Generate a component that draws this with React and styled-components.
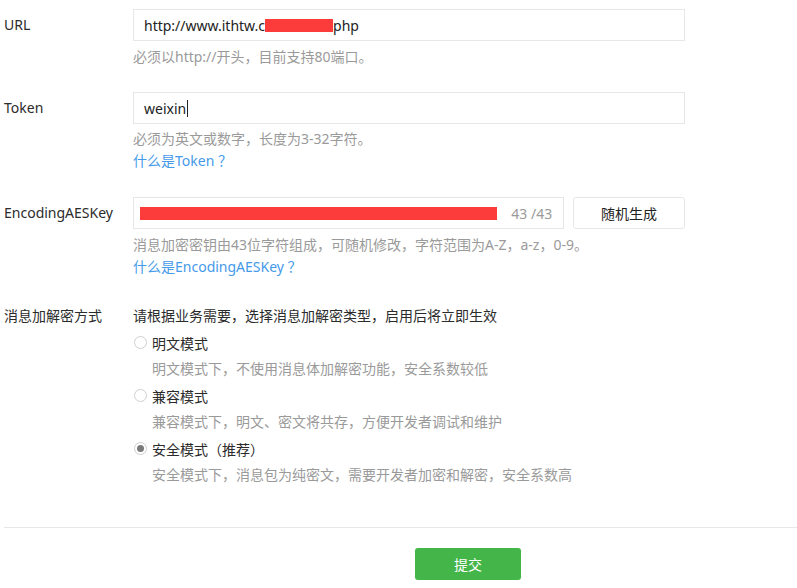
import React from "react";
import styled, { createGlobalStyle } from "styled-components";

const Global = createGlobalStyle`
  html, body { margin: 0; padding: 0; background: #fff; }
  body {
    font-family: "Noto Sans", "Noto Sans CJK SC", sans-serif;
    font-size: 14px;
    color: #353535;
  }
`;

const Page = styled.div`
  width: 797px;
  padding: 9px 0 0 4px;
  box-sizing: border-box;
`;

const Row = styled.div`
  display: grid;
  grid-template-columns: 129px 552px;
  margin-bottom: ${(p) => p.$gap || 0}px;
`;

const Label = styled.div`
  line-height: ${(p) => p.$lh || "31px"};
  color: #2b2b2b;
  white-space: nowrap;
`;

const Field = styled.div`
  display: flex;
  flex-direction: column;
`;

const InputLine = styled.div`
  display: flex;
  gap: 9px;
`;

const Input = styled.div`
  box-sizing: border-box;
  height: 32px;
  width: ${(p) => p.$w || 552}px;
  border: 1px solid #e7e7eb;
  padding: 0 11px 0 ${(p) => p.$pl || 10}px;
  display: flex;
  align-items: center;
  color: #222;
  font-size: 14px;
  white-space: nowrap;
  overflow: hidden;
`;

const Redact = styled.span`
  display: inline-block;
  width: ${(p) => p.$w}px;
  height: ${(p) => p.$h || 13}px;
  background: #fc3b3b;
  flex: none;
  margin-top: ${(p) => p.$mt || 0}px;
`;

const Caret = styled.span`
  display: inline-block;
  width: 1px;
  height: 17px;
  background: #222;
  margin-left: 1px;
`;

const Counter = styled.span`
  margin-left: auto;
  color: #9a9a9a;
`;

const GhostButton = styled.div`
  box-sizing: border-box;
  width: 112px;
  height: 32px;
  border: 1px solid #e4e8eb;
  border-radius: 3px;
  display: flex;
  align-items: center;
  justify-content: center;
  color: #222;
`;

const Hint = styled.div`
  line-height: 22px;
  color: #9a9a9a;
  margin-top: ${(p) => p.$mt || 0}px;
  white-space: nowrap;
`;

const Link = styled.a`
  display: block;
  line-height: 22px;
  color: #459ae9;
  text-decoration: none;
`;

const Lines = styled.div`
  display: flex;
  flex-direction: column;
`;

const Line = styled.div`
  line-height: 26.5px;
  height: 26.5px;
  white-space: nowrap;
  color: ${(p) => (p.$muted ? "#9a9a9a" : "#2b2b2b")};
  padding-left: ${(p) => (p.$indent ? 19 : 0)}px;
`;

const RadioRow = styled.label`
  display: flex;
  align-items: center;
  height: 26.5px;
  gap: 5px;
  padding-left: 1px;
  color: #2b2b2b;
`;

const Circle = styled.span`
  box-sizing: border-box;
  width: 13px;
  height: 13px;
  border-radius: 50%;
  border: 1px solid #cfcfcf;
  display: flex;
  align-items: center;
  justify-content: center;
  flex: none;
  &::after {
    content: "";
    width: 7px;
    height: 7px;
    border-radius: 50%;
    background: ${(p) => (p.$checked ? "#7a7a7a" : "transparent")};
  }
`;

const Divider = styled.hr`
  border: 0;
  border-top: 1px solid #e7e7eb;
  margin: 38px 0 0 0;
  width: 793px;
`;

const Footer = styled.div`
  padding: 20px 0 0 411px;
`;

const Submit = styled.button`
  width: 106px;
  height: 32px;
  border: 0;
  border-radius: 3px;
  background: #44b549;
  color: #fff;
  font-family: inherit;
  font-size: 14px;
  padding: 0;
`;

const modes = [
  { name: "明文模式", desc: "明文模式下，不使用消息体加解密功能，安全系数较低" },
  { name: "兼容模式", desc: "兼容模式下，明文、密文将共存，方便开发者调试和维护" },
  { name: "安全模式（推荐）", desc: "安全模式下，消息包为纯密文，需要开发者加密和解密，安全系数高", checked: true },
];

export default function App() {
  return (
    <Page>
      <Global />
      <Row $gap={24}>
        <Label>URL</Label>
        <Field>
          <Input>
            http://www.ithtw.c
            <Redact $w={68} />
            php
          </Input>
          <Hint $mt={5}>必须以http://开头，目前支持80端口。</Hint>
        </Field>
      </Row>
      <Row $gap={25}>
        <Label>Token</Label>
        <Field>
          <Input>
            weixin
            <Caret />
          </Input>
          <Hint $mt={4}>必须为英文或数字，长度为3-32字符。</Hint>
          <Link href="#">什么是Token ？</Link>
        </Field>
      </Row>
      <Row $gap={25}>
        <Label>EncodingAESKey</Label>
        <Field>
          <InputLine>
            <Input $w={432} $pl={6}>
              <Redact $w={357} $h={13} />
              <Counter>43 /43</Counter>
            </Input>
            <GhostButton>随机生成</GhostButton>
          </InputLine>
          <Hint $mt={5}>消息加密密钥由43位字符组成，可随机修改，字符范围为A-Z，a-z，0-9。</Hint>
          <Link href="#">什么是EncodingAESKey ？</Link>
        </Field>
      </Row>
      <Row>
        <Label $lh="26.5px">消息加解密方式</Label>
        <Lines>
          <Line>请根据业务需要，选择消息加解密类型，启用后将立即生效</Line>
          {modes.map((m) => (
            <React.Fragment key={m.name}>
              <RadioRow>
                <Circle $checked={m.checked} />
                {m.name}
              </RadioRow>
              <Line $muted $indent>{m.desc}</Line>
            </React.Fragment>
          ))}
        </Lines>
      </Row>
      <Divider />
      <Footer>
        <Submit>提交</Submit>
      </Footer>
    </Page>
  );
}
